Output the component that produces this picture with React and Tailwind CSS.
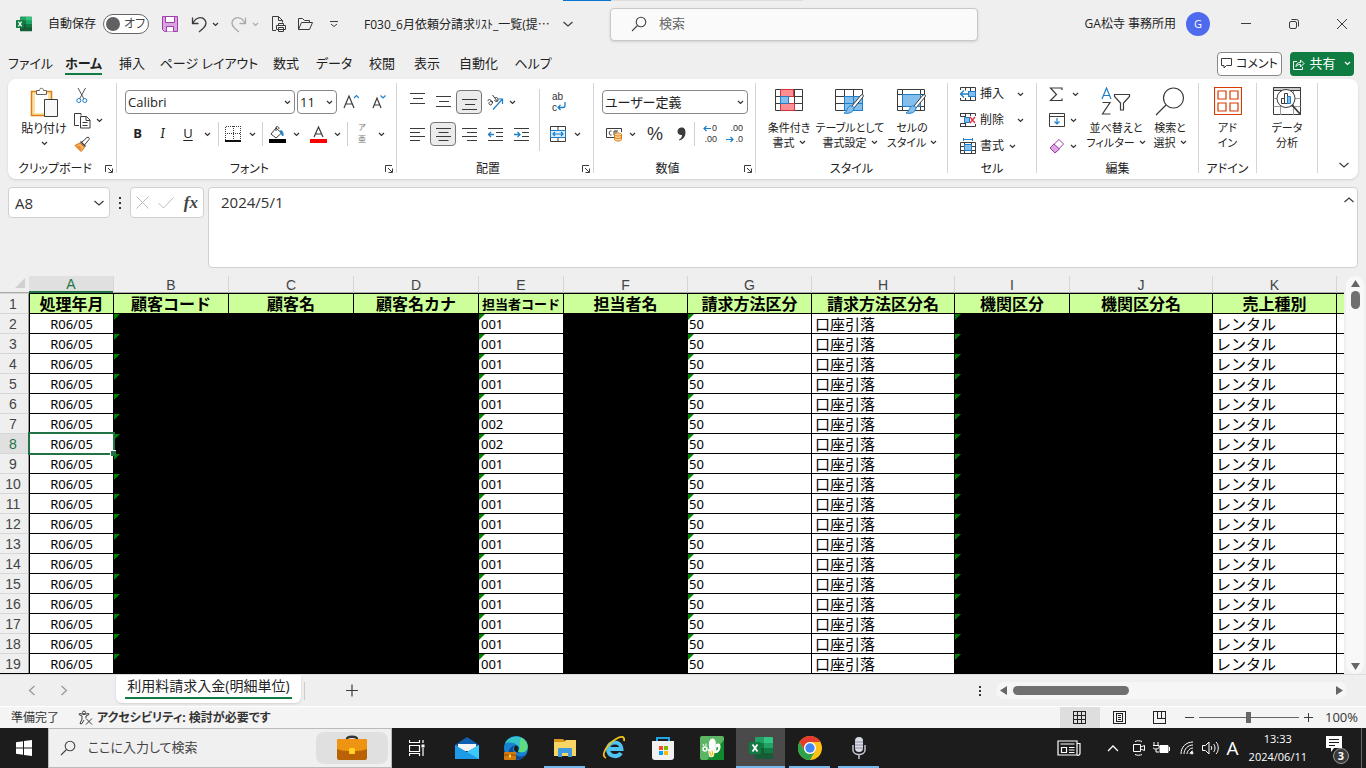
import React from 'react';

const Svg = ({ w = 16, h = 16, children, className = '', ...rest }) => (
  <svg
    width={w}
    height={h}
    viewBox={`0 0 ${w} ${h}`}
    fill="none"
    stroke="#3b3b3b"
    aria-hidden="true"
    className={`shrink-0 ${className}`}
    {...rest}
  >
    {children}
  </svg>
);

const Chevron = ({ className = '', color = '#333' }) => (
  <span className={`flex shrink-0 items-center justify-center ${className}`}>
    <Svg w={7} h={5} stroke={color} strokeWidth="1.2">
      <path d="M1 1l2.5 2.5L6 1" />
    </Svg>
  </span>
);

const BigChevron = ({ up }) => (
  <Svg w={12} h={8} strokeWidth="1.2">
    <path d={up ? 'M1.5 6L6 2l4.5 4' : 'M1.5 2L6 6l4.5-4'} />
  </Svg>
);

const ExcelLogo = ({ size = 16 }) => (
  <svg width={size} height={size} viewBox="0 0 24 24" aria-hidden="true">
    <rect x="6" y="1" width="18" height="22" rx="1" fill="#185c37" />
    <path d="M6 2a1 1 0 0 1 1-1h8v6H6z" fill="#21a366" />
    <path d="M15 1h8a1 1 0 0 1 1 1v5h-9z" fill="#33c481" />
    <path d="M6 7h9v5H6z" fill="#107c41" />
    <path d="M15 7h9v5h-9z" fill="#21a366" />
    <path d="M15 12h9v5h-9z" fill="#107c41" />
    <rect x="0" y="6" width="12" height="12" rx="1" fill="#107c41" />
    <path d="M3.500 8.500l5 7M8.500 8.500l-5 7" stroke="#fff" strokeWidth="1.800" />
  </svg>
);

const SearchIcon = ({ size = 16 }) => (
  <svg width={size} height={size} viewBox="0 0 16 16" fill="none" stroke="#444" strokeWidth="1.1" aria-hidden="true">
    <circle cx="10" cy="6" r="4.800" />
    <path d="M6.500 9.500L1 15" />
  </svg>
);

/* ---------- title bar ---------- */

function TitleBar() {
  return (
    <header className="flex h-12 shrink-0 items-center">
      <div className="flex w-[610px] shrink-0 items-center pl-4">
        <ExcelLogo />
        <label htmlFor="autosave" className="ml-4 w-[55px]">自動保存</label>
        <span className="relative flex h-5 w-[46px] items-center rounded-full border border-[#666] bg-white pl-0.5">
          <input id="autosave" type="checkbox" role="switch" className="absolute inset-0 appearance-none" />
          <span className="size-3.5 rounded-full bg-[#616161]" />
          <span className="ml-1 text-[#444]">オフ</span>
        </span>
        <button aria-label="上書き保存" className="ml-3">
          <Svg w={18} h={18} stroke="#a23bab">
            <path d="M1.500 1.500h15v15h-13l-2-2z" fill="#d9a5e0" />
            <path d="M4.500 1.500v6h9v-6zM5.500 16.500v-5h7v5" fill="#fff" />
          </Svg>
        </button>
        <button aria-label="元に戻す" className="ml-3 flex items-center">
          <Svg w={17} h={17} strokeWidth="1.300">
            <path d="M1.500 1.500v6h6M2 7c3-6 9-6.500 11.500-3.500s1 6.500-1 8.500L8 16" />
          </Svg>
          <Chevron className="ml-1" />
        </button>
        <button aria-label="やり直し" className="ml-3 flex items-center">
          <Svg w={17} h={17} strokeWidth="1.300" stroke="#aaa">
            <path d="M14.500 1.500v6h-6M14 7C11 1 5 .5 2.500 3.500s-1 6.500 1 8.500L8 16" />
          </Svg>
          <Chevron className="ml-1" color="#aaa" />
        </button>
        <button aria-label="印刷プレビュー" className="ml-3">
          <Svg w={16} h={18}>
            <path d="M5 15.500H1.500v-14h6l4 4v2M7.500 1.500v4h4" />
            <path d="M7.500 10.500v-2h5v2M5.500 14.500v-4h9v4zM7.500 12.500h5v4h-5z" fill="#efefef" />
          </Svg>
        </button>
        <button aria-label="開く" className="ml-2.5">
          <Svg w={17} h={16}>
            <path d="M1.500 13.500v-11h4l2 2h5v2M1.500 13.500l3-7h11l-3 7z" />
          </Svg>
        </button>
        <button aria-label="クイック アクセス ツール バーのユーザー設定" className="ml-4">
          <Svg w={8} h={8}>
            <path d="M0 1.500h8M1 4l3 2.500L7 4" />
          </Svg>
        </button>
        <h1 className="ml-[26px] w-[198px] whitespace-nowrap">
          F030_6月依頼分請求ﾘｽﾄ_一覧(提<span className="[font-family:'Noto_Sans_CJK_JP',sans-serif]">…</span>
        </h1>
        <BigChevron />
      </div>
      <div className="flex h-[33px] w-[368px] items-center rounded border border-[#c8c8c8] bg-[#fafafa] pl-5 shadow-sm">
        <SearchIcon />
        <input aria-label="検索" placeholder="検索" className="ml-3 w-72 text-[13px] outline-none placeholder:text-[#666]" />
      </div>
      <div className="ml-auto flex items-center">
        <span className="whitespace-nowrap">GA松寺 事務所用</span>
        <span className="mr-3 ml-2.5 flex size-6 items-center justify-center rounded-full bg-[#4f6bed] text-[11px] text-white">G</span>
        <button aria-label="最小化" className="flex w-12 justify-center">
          <Svg w={12} h={12}><path d="M1 5.500h10" /></Svg>
        </button>
        <button aria-label="元に戻す (縮小)" className="flex w-12 justify-center">
          <Svg w={12} h={12}>
            <rect x="1.500" y="3.500" width="7" height="7" rx="1.500" />
            <path d="M3.500 1.500h5a2 2 0 0 1 2 2v5" />
          </Svg>
        </button>
        <button aria-label="閉じる" className="flex w-12 justify-center">
          <Svg w={12} h={12}><path d="M1 1l10 10M11 1L1 11" /></Svg>
        </button>
      </div>
    </header>
  );
}

/* ---------- ribbon tabs ---------- */

const tabs = [
  { name: 'ファイル', width: 'w-[55px]' },
  { name: 'ホーム', width: 'w-[51px]', active: true },
  { name: '挿入', width: 'w-[46px]' },
  { name: 'ページ レイアウト', width: 'w-[108px]' },
  { name: '数式', width: 'w-[46px]' },
  { name: 'データ', width: 'w-[50px]' },
  { name: '校閲', width: 'w-[46px]' },
  { name: '表示', width: 'w-[44px]' },
  { name: '自動化', width: 'w-[59px]' },
  { name: 'ヘルプ', width: 'w-[50px]' },
];

function RibbonTabs() {
  return (
    <nav className="flex h-[31px] shrink-0 items-center pl-[3px] text-[13px]">
      {tabs.map((tab) => (
        <button key={tab.name} className={`flex shrink-0 justify-center whitespace-nowrap ${tab.width}`}>
          <span className={`border-b-2 leading-5 ${tab.active ? 'border-[#107c41] font-bold' : 'border-transparent'}`}>
            {tab.name}
          </span>
        </button>
      ))}
      <div className="ml-auto flex gap-2 pr-3">
        <button className="flex h-6 w-[65px] items-center justify-center gap-1 rounded border border-[#888] bg-white text-xs whitespace-nowrap">
          <Svg w={11} h={11}><path d="M.5.5h10v7h-5L3 10V7.500H.5z" /></Svg>
          コメント
        </button>
        <button className="flex h-6 w-16 items-center justify-center gap-1 rounded bg-[#107c41] text-white whitespace-nowrap">
          <Svg w={12} h={12} stroke="#fff">
            <path d="M4 3.500H.5v8h9V9M3 8.500c0-3 2-4 4.500-4V2L11 5.500 7.500 9V6.500C5.500 6.500 4 7 3 8.500z" />
          </Svg>
          共有
          <Chevron color="#fff" className="ml-1" />
        </button>
      </div>
    </nav>
  );
}

/* ---------- ribbon ---------- */

const Rule = () => <div className="mt-1 mb-1.5 w-px shrink-0 bg-[#d4d4d4]" />;
const ShortRule = ({ className = '' }) => <span className={`h-6 w-px shrink-0 bg-[#d0d0d0] ${className}`} />;

function Group({ label, launcher, width, children }) {
  return (
    <>
      <section aria-label={label} className={`relative flex shrink-0 flex-col ${width}`}>
        <div className="flex flex-1">{children}</div>
        <div className={`h-[19px] text-center leading-[18px] whitespace-nowrap ${launcher ? 'pr-3.5' : ''}`}>{label}</div>
        {launcher && (
          <button aria-label={`${label}の設定`} className="absolute right-[3px] bottom-1.5">
            <Svg w={8} h={8}><path d="M.5 7V.5H7M3 3l4 4M7.500 3.500v4h-4" /></Svg>
          </button>
        )}
      </section>
      <Rule />
    </>
  );
}

function Tool({ label, className = 'w-[26px]', active, children }) {
  return (
    <button
      aria-label={label}
      className={`flex h-6 shrink-0 items-center justify-center rounded ${active ? 'border border-[#777] bg-[#ebebeb]' : ''} ${className}`}
    >
      {children}
    </button>
  );
}

function BigButton({ icon, lines, chevron, className }) {
  return (
    <button className={`flex shrink-0 flex-col items-center pt-2 text-[11px] leading-[15px] whitespace-nowrap ${className}`}>
      <span className="flex h-[33px] items-start">{icon}</span>
      <span>{lines[0]}</span>
      <span className="flex items-center">
        {lines[1]}
        {chevron && <Chevron className="ml-1" />}
      </span>
    </button>
  );
}

function DropBox({ label, value, className }) {
  return (
    <span className={`relative flex h-6 items-center rounded border border-[#888] bg-white ${className}`}>
      <select aria-label={label} defaultValue={value} className="h-full w-full appearance-none pl-0.5 text-[13px] leading-5 outline-none">
        <option>{value}</option>
      </select>
      <span className="pointer-events-none absolute right-[3px]"><Chevron /></span>
    </span>
  );
}

const bars = {
  top: 'M0 1.500h15M3 6.500h10M0 11.500h15',
  left: 'M0 1.500h15M0 5.500h10M0 9.500h15M0 13.500h10',
  center: 'M0 1.500h15M2.500 5.500h10M0 9.500h15M2.500 13.500h10',
  right: 'M0 1.500h15M5 5.500h10M0 9.500h15M5 13.500h10',
};

const Lines = ({ d, className }) => <Svg w={15} h={15} className={className}><path d={d} /></Svg>;

const brushPath = (
  <>
    <path d="M28 10l-9 11c-1 1-3-.5-2-2L26 8c2-1 3 0 2 2z" fill="#fff" />
    <path d="M17 19c2 .5 2.500 2 1.500 4-1.500 3-6 4-9.500 3 2.500-1 2.500-2.500 3.500-4.500 1-2 2.500-3 4.500-2.500z" fill="#83beec" stroke="#1e7fc8" />
  </>
);

const CondIcon = (
  <Svg w={28} h={29}>
    <path d="M.5 2.500h27v21H.5zM.5 9.500h27M.5 16.500h27M19.500 2.500v21M5.500 2.500v21" />
    <path d="M5.500 2.500h13v7h-13zM5.500 16.500h14v7h-14z" fill="#ff8f94" stroke="#d13438" />
    <path d="M5.500 9.500h8v7h-8z" fill="#83beec" stroke="#1e7fc8" />
  </Svg>
);

const TableIcon = (
  <Svg w={31} h={29}>
    <path d="M.5 2.500h27v21H.5zM.5 9.500h27M.5 16.500h27M9.500 2.500v21M18.500 2.500v21" />
    <path d="M9.500 9.500h18v14h-18z" fill="#83beec" stroke="#1e7fc8" />
    <path d="M18.500 9.500v14M9.500 16.500h18" stroke="#1e7fc8" />
    {brushPath}
  </Svg>
);

const StyleIcon = (
  <Svg w={31} h={29}>
    <path d="M.5 2.500h27v21H.5zM.5 7.500h27M.5 19.500h27M5.500 2.500v21M23.500 2.500v21" />
    <path d="M5.500 7.500h18v12h-18z" fill="#83beec" stroke="#1e7fc8" />
    {brushPath}
  </Svg>
);

const cellTools = [
  {
    name: '挿入',
    gap: 'ml-2.5',
    icon: (
      <Svg>
        <path d="M.5 4V1.500h15v13H.5V12M5.500 1.500v3M10.500 1.500v13M5.500 12v2.500M8 5.500h7.500v5H8" />
        <path d="M8.500 5.500h7v5h-7z" fill="#83beec" stroke="#1e7fc8" />
        <path d="M8 8H.5M4 4.500L.5 8 4 11.500" stroke="#1e7fc8" strokeWidth="1.300" />
      </Svg>
    ),
  },
  {
    name: '削除',
    gap: 'ml-2.5',
    icon: (
      <Svg>
        <path d="M0 1.500h15.500V4M.5 1.500v3h5M.5 14.500v-3h5M0 14.500h15.500V12M5.500 1.500v13M10.500 1.500V4" />
        <path d="M4.500 5.500h5v5h-5z" fill="#83beec" stroke="#1e7fc8" />
        <path d="M10 5l5 6M15 5l-5 6" stroke="#e0303a" strokeWidth="1.300" />
      </Svg>
    ),
  },
  {
    name: '書式',
    gap: 'ml-0.5',
    icon: (
      <Svg>
        <path d="M.5 4.500h15v11H.5zM.5 8.500h15M.5 12.500h15M4.500 4.500v11M11.500 4.500v11" />
        <path d="M4.500 6.500h7v6h-7z" fill="#83beec" stroke="#1e7fc8" />
        <path d="M4 1.500h8M3.500 0v3M12.500 0v3" stroke="#1e7fc8" />
      </Svg>
    ),
  },
];

function Ribbon() {
  return (
    <div className="mx-2 flex h-[100px] shrink-0 rounded-lg bg-white shadow-sm">
      <Group label="クリップボード" launcher width="w-[108px]">
        <button className="ml-2.5 flex w-[52px] flex-col items-center pt-2 leading-4 whitespace-nowrap">
          <Svg w={30} h={32}>
            <path d="M2.500 4.500h20v24h-20z" fill="#fbe3a6" stroke="#e07b12" strokeWidth="1.500" />
            <path d="M6 7h13v19H6z" fill="#fff" stroke="none" />
            <path d="M7.500 7.500v-4h3c0-3 4-3 4 0h3v4z" fill="#fff" stroke="#666" />
            <path d="M15.500 12.500h13v17h-13z" fill="#f8f8f8" />
          </Svg>
          <span className="mt-0.5">貼り付け</span>
          <Chevron className="h-3" />
        </button>
        <div className="flex flex-col pt-1">
          <Tool label="切り取り" className="w-6">
            <Svg w={12} h={17}>
              <path d="M2 1l6 11M9.500 1l-6 11" stroke="#555" />
              <circle cx="2.800" cy="13.500" r="2" stroke="#1e7fc8" />
              <circle cx="8.800" cy="13.500" r="2" stroke="#1e7fc8" />
            </Svg>
          </Tool>
          <div className="flex pt-px">
            <Tool label="コピー" className="w-6">
              <Svg w={17} h={17}>
                <path d="M7 3.500V1.500H.5v12H5" />
                <path d="M6.500 4.500h6l3.500 3.500v8H6.500zM12 4.500v4h4M8.500 10.500h5M8.500 13.500h5" />
              </Svg>
            </Tool>
            <Chevron className="w-2.5" />
          </div>
          <Tool label="書式のコピー/貼り付け" className="w-6">
            <Svg w={17} h={17}>
              <path d="M8 6l5-4.500c1.500-1 3 .5 2 2L10.500 9" fill="#fff" />
              <path d="M6.500 5.500l5 5" strokeWidth="1.500" />
              <path d="M6 7l4.500 4.500L7 15.500 1 9.500z" fill="#f9b15b" stroke="#d96f0e" />
              <path d="M3 11h3v3" stroke="#d96f0e" />
            </Svg>
          </Tool>
        </div>
      </Group>

      <Group label="フォント" launcher width="w-[279px]">
        <div className="flex flex-col gap-2 pt-[11px] pl-2">
          <div className="flex items-center">
            <DropBox label="フォント" value="Calibri" className="w-[170px]" />
            <DropBox label="フォント サイズ" value="11" className="ml-0.5 w-10" />
            <Tool label="フォント サイズの拡大" className="w-7">
              <Svg w={16} h={16}>
                <path d="M1 14L6 2l5 12M3 10h6" strokeWidth="1.200" />
                <path d="M11 4l2.500-2.500L16 4" stroke="#1e7fc8" strokeWidth="1.200" />
              </Svg>
            </Tool>
            <Tool label="フォント サイズの縮小">
              <Svg w={15} h={16}>
                <path d="M2 14L6 4l4 10M3.500 11h5" strokeWidth="1.200" />
                <path d="M9.500 1.500L12 4l2.500-2.500" stroke="#1e7fc8" strokeWidth="1.200" />
              </Svg>
            </Tool>
          </div>
          <div className="flex items-center">
            <Tool label="太字" className="w-[25px] text-[13px] font-bold">B</Tool>
            <Tool label="斜体" className="w-[25px] font-serif text-[14px] italic">I</Tool>
            <Tool label="下線" className="w-[26px] text-[13px] underline underline-offset-2">U</Tool>
            <Chevron className="w-3" />
            <ShortRule className="mx-[5px]" />
            <Tool label="罫線" className="w-[18px]">
              <Svg shapeRendering="crispEdges">
                <path d="M.5 14V.5h15V14M8 0v14M0 7.500h16" strokeDasharray="1 1" />
                <path d="M0 15h16" strokeWidth="2" stroke="#111" />
              </Svg>
            </Tool>
            <Chevron className="w-5" />
            <ShortRule />
            <Tool label="塗りつぶしの色" className="w-7">
              <Svg w={17} h={17}>
                <path d="M7 2L2 8l5 4 5.500-5z" />
                <path d="M7 5V1c2-1 3 0 3 2" />
                <path d="M11 5c2-1 3.500 1 3 5-1.500-1-1.500-3-3-5z" fill="#1e7fc8" stroke="#1e7fc8" />
                <path d="M0 15h17" strokeWidth="4" stroke="#000" />
              </Svg>
            </Tool>
            <Chevron className="w-2.5" />
            <Tool label="フォントの色" className="ml-1 w-[26px]">
              <Svg w={17} h={17}>
                <path d="M4 11l4.500-10L13 11M5.500 8h6" strokeWidth="1.200" />
                <path d="M0 15h17" strokeWidth="4" stroke="#f00" />
              </Svg>
            </Tool>
            <Chevron className="w-3" />
            <ShortRule className="ml-1" />
            <Tool
              label="ふりがなの表示/非表示"
              className="w-7 flex-col text-[8px] leading-[12px] text-[#777] [font-family:'Liberation_Sans','Noto_Sans_CJK_JP',sans-serif]"
            >
              <span>ア</span>
              <span>亜</span>
            </Tool>
            <Chevron className="w-2.5" />
          </div>
        </div>
      </Group>

      <Group label="配置" launcher width="w-[196px]">
        <div className="flex flex-col gap-2 pt-[11px] pl-[7px]">
          <div className="flex">
            <Tool label="上揃え"><Lines d={bars.top} className="-mt-1.5" /></Tool>
            <Tool label="上下中央揃え"><Lines d={bars.top} /></Tool>
            <Tool label="下揃え" active><Lines d={bars.top} className="mt-1.5" /></Tool>
            <Tool label="方向">
              <Svg w={17} h={17}>
                <path d="M1 7c0-2 2-2 3.500 0l1.500 2M5 7c-2 0-4 2-2.500 3.500S6 10 5 7M5.500 1l5 6.500M8 4c2-1.500 4 1 2.500 3-1 1-2.500.5-3-1" />
                <path d="M6 15.500L15.500 5M10.500 5h5v5" stroke="#1e7fc8" strokeWidth="1.200" />
              </Svg>
            </Tool>
            <Chevron className="w-2" />
          </div>
          <div className="flex">
            <Tool label="左揃え"><Lines d={bars.left} /></Tool>
            <Tool label="中央揃え" active><Lines d={bars.center} /></Tool>
            <Tool label="右揃え"><Lines d={bars.right} /></Tool>
            <Tool label="インデントを減らす">
              <Svg w={15} h={15}>
                <path d="M0 1.500h15M8 5.500h7M8 9.500h7M0 13.500h15" />
                <path d="M6 7.500H.5M3 5L.5 7.500 3 10" stroke="#1e7fc8" strokeWidth="1.300" />
              </Svg>
            </Tool>
            <Tool label="インデントを増やす">
              <Svg w={15} h={15}>
                <path d="M0 1.500h15M8 5.500h7M8 9.500h7M0 13.500h15" />
                <path d="M0 7.500h6M3.500 5L6 7.500 3.500 10" stroke="#1e7fc8" strokeWidth="1.300" />
              </Svg>
            </Tool>
          </div>
        </div>
        <span className="mt-2.5 ml-[5px] h-[62px] w-px bg-[#d0d0d0]" />
        <div className="flex flex-col gap-2 pt-[11px] pl-1.5">
          <Tool label="折り返して全体を表示する" className="w-[26px] flex-col text-[10px] leading-[10px] text-[#333] [font-family:'Liberation_Sans',sans-serif]">
            <span className="h-[11px] w-3.5 text-left leading-[11px]">ab</span>
            <span className="flex h-[11px] w-3.5 leading-[11px]">
              c
              <Svg w={9} h={9} stroke="#1e7fc8" strokeWidth="1.300">
                <path d="M8 0v3.500c0 1-1 2-2 2H1M3.500 3L1 5.500 3.500 8" />
              </Svg>
            </span>
          </Tool>
          <div className="flex">
            <Tool label="セルを結合して中央揃え" className="w-6">
              <Svg>
                <path d="M.5.5h15v15H.5zM8 .5v4M8 12v3.500" />
                <path d="M.5 4.500h15v7H.5z" fill="#d9ecfb" stroke="#1e7fc8" />
                <path d="M3 8h10M5 6L3 8l2 2M11 6l2 2-2 2" stroke="#1e7fc8" strokeWidth="1.200" />
              </Svg>
            </Tool>
            <Chevron className="w-3.5" />
          </div>
        </div>
      </Group>

      <Group label="数値" launcher width="w-[161px]">
        <div className="flex flex-col gap-2 pt-[11px] pl-2">
          <DropBox label="数値の書式" value="ユーザー定義" className="w-[146px]" />
          <div className="flex items-center">
            <Tool label="通貨表示形式" className="w-6">
              <Svg w={17} h={15}>
                <path d="M8 10.500H.5v-9h15V5M5.500 4c-3-1-3 5 0 4M8 8V4h4M10 4v3" />
                <path d="M8.500 7.500v5c0 2 7 2 7 0v-5c0-2-7-2-7 0s7 2 7 0M8.500 10c0 2 7 2 7 0" fill="#fbd9a8" stroke="#e07b12" />
              </Svg>
            </Tool>
            <Chevron className="w-3" />
            <Tool label="パーセント スタイル" className="ml-1 w-[26px] text-[18px] text-[#333] [font-family:'Liberation_Sans',sans-serif]">%</Tool>
            <Tool label="桁区切りスタイル">
              <Svg w={9} h={14} stroke="none">
                <path d="M4.500.5c3 0 4 2 4 5 0 4-2 6.500-6 8l-.5-1c2-1 3-2.500 3-4.500C2.500 8.500.5 7 .5 4.500.5 2 2.500.5 4.500.5z" fill="#3b3b3b" />
              </Svg>
            </Tool>
            <ShortRule className="mr-px" />
            <Tool
              label="小数点以下の表示桁数を増やす"
              className="w-[26px] flex-col text-[9px] leading-[11px] text-[#333] [font-family:'Liberation_Sans',sans-serif]"
            >
              <span className="flex h-[11px] w-4 items-center justify-end">
                <Svg w={9} h={7} stroke="#1e7fc8" strokeWidth="1.200"><path d="M8 3.500H1M3.500 1L1 3.500 3.500 6" /></Svg>0
              </span>
              <span className="h-[11px] w-4 text-right">.00</span>
            </Tool>
            <Tool
              label="小数点以下の表示桁数を減らす"
              className="w-[26px] flex-col text-[9px] leading-[11px] text-[#333] [font-family:'Liberation_Sans',sans-serif]"
            >
              <span className="h-[11px] w-4 text-right">.00</span>
              <span className="flex h-[11px] w-4 items-center justify-end">
                <Svg w={9} h={7} stroke="#1e7fc8" strokeWidth="1.200"><path d="M0 3.500h7M4.500 1L7 3.500 4.500 6" /></Svg>.0
              </span>
            </Tool>
          </div>
        </div>
      </Group>

      <Group label="スタイル" width="w-[191px]">
        <BigButton className="ml-1 w-[58px]" icon={CondIcon} lines={['条件付き', '書式']} chevron />
        <BigButton className="w-16" icon={TableIcon} lines={['テーブルとして', '書式設定']} chevron />
        <BigButton className="w-[60px]" icon={StyleIcon} lines={['セルの', 'スタイル']} chevron />
      </Group>

      <Group label="セル" width="w-[88px]">
        <div className="flex flex-col gap-0.5 pt-[3px] pl-3">
          {cellTools.map((tool) => (
            <button key={tool.name} className="flex h-6 items-center">
              {tool.icon}
              <span className="ml-1">{tool.name}</span>
              <Chevron className={`w-3 ${tool.gap}`} />
            </button>
          ))}
        </div>
      </Group>

      <Group label="編集" width="w-[161px]">
        <div className="flex w-[45px] flex-col gap-0.5 pt-[3px] pl-3">
          <button aria-label="合計" className="flex h-6 items-center">
            <Svg w={14} h={15} strokeWidth="1.200"><path d="M13 3V1H1.500l6 6.500-6 6H13v-2" /></Svg>
            <Chevron className="ml-1.5 w-3" />
          </button>
          <button aria-label="フィル" className="flex h-6 items-center">
            <Svg w={16} h={14}>
              <path d="M.5.5h15v13H.5zM.5 3.500h15" />
              <path d="M8 5v6M5.500 8.500L8 11l2.500-2.500" stroke="#1e7fc8" strokeWidth="1.200" />
            </Svg>
            <Chevron className="ml-0.5 w-3" />
          </button>
          <button aria-label="クリア" className="flex h-6 items-center">
            <Svg stroke="#a23bab">
              <path d="M10 1.500l4.500 4.500-8.500 9L1 10z" fill="#fff" />
              <path d="M5 6l5.500 5L6 15 1 10z" fill="#d9a5e0" />
            </Svg>
            <Chevron className="ml-0.5 w-3" />
          </button>
        </div>
        <BigButton
          className="w-[68px]"
          icon={
            <Svg w={30} h={29} strokeWidth="1.200">
              <path d="M1 12L5.500 1 10 12M2.500 8.500h6" stroke="#1e7fc8" />
              <path d="M1.500 15.500H9L1.500 27H9.500" />
              <path d="M13.500 7.500h15v2L22.500 16v7h-3v-7l-6-6.500z" />
            </Svg>
          }
          lines={['並べ替えと', 'フィルター']}
          chevron
        />
        <BigButton
          className="w-10"
          icon={
            <Svg w={30} h={29} strokeWidth="1.200">
              <circle cx="18.500" cy="11" r="10" />
              <path d="M11 18L1 28" />
            </Svg>
          }
          lines={['検索と', '選択']}
          chevron
        />
      </Group>

      <Group label="アドイン" width="w-[57px]">
        <BigButton
          className="w-full"
          icon={
            <Svg w={28} h={28} stroke="#d83b01" strokeWidth="1.200">
              <path d="M.5.5h27v27H.5zM4 4h8v8H4zM16 4h8v8h-8zM4 16h8v8H4zM16 16h8v8h-8z" />
            </Svg>
          }
          lines={['アド', 'イン']}
        />
      </Group>

      <Group width="w-[60px]">
        <BigButton
          className="w-full"
          icon={
            <Svg w={28} h={29}>
              <path d="M.5.500h27v27H.5z" />
              <path d="M.5.500h27v3H.5z" fill="#ccc" />
              <path d="M.5 11.500h27M.5 19.500h27M7.500 4v24M20.500 4v24" stroke="#999" />
              <circle cx="13" cy="11.500" r="9" fill="#fff" />
              <path d="M19 18l8.500 9.500" strokeWidth="1.800" />
              <path d="M8.500 11.500h3v5h-3zM11.500 6.500h3v10h-3z" />
              <path d="M14.500 9.500h3v7h-3z" fill="#83beec" stroke="#1e7fc8" />
            </Svg>
          }
          lines={['データ', '分析']}
        />
      </Group>

      <button aria-label="リボンの表示オプション" className="mt-auto mr-2 mb-2.5 ml-auto">
        <BigChevron />
      </button>
    </div>
  );
}

/* ---------- formula bar ---------- */

function FormulaBar() {
  return (
    <div className="flex shrink-0 items-start px-2 py-2 text-[15px]">
      <div className="flex h-[31px] w-[102px] items-center rounded border border-[#d0d0d0] bg-white pr-1">
        <input aria-label="名前ボックス" defaultValue="A8" className="w-full min-w-0 pl-1.5 text-[#333] outline-none" />
        <BigChevron />
      </div>
      <div className="flex h-[31px] w-5 items-center justify-center">
        <Svg w={2} h={12} stroke="none" fill="#333"><path d="M0 0h2v2H0zM0 5h2v2H0zM0 10h2v2H0z" /></Svg>
      </div>
      <div className="flex h-[31px] w-[74px] items-center justify-between rounded border border-[#d0d0d0] bg-white px-[5px]">
        <button aria-label="キャンセル"><Svg w={13} h={13} stroke="#bbb"><path d="M.5.5l12 12M12.500.5l-12 12" /></Svg></button>
        <button aria-label="入力"><Svg w={16} h={12} stroke="#bbb"><path d="M.5 6l5 5L15.500.5" /></Svg></button>
        <button className="text-[17px] leading-6 font-bold text-[#444] italic [font-family:'Liberation_Serif',serif]" aria-label="関数の挿入">fx</button>
      </div>
      <div className="ml-1 flex h-[81px] flex-1 items-start rounded border border-[#d0d0d0] bg-white">
        <textarea aria-label="数式バー" defaultValue="2024/5/1" className="h-full flex-1 resize-none pt-1 pl-3 leading-5 text-[#333] outline-none" />
        <button aria-label="数式バーの折りたたみ" className="mt-2 mr-0.5 flex"><BigChevron up /></button>
      </div>
    </div>
  );
}

/* ---------- worksheet ---------- */

const columns = [
  { id: 'A', title: '処理年月', width: 'w-[84px]' },
  { id: 'B', title: '顧客コード', width: 'w-[115px]', masked: true, flag: true },
  { id: 'C', title: '顧客名', width: 'w-[125px]', masked: true },
  { id: 'D', title: '顧客名カナ', width: 'w-[125px]', masked: true },
  { id: 'E', title: '担当者コード', width: 'w-[85px]', flag: true },
  { id: 'F', title: '担当者名', width: 'w-[124px]', masked: true },
  { id: 'G', title: '請求方法区分', width: 'w-[124px]', flag: true },
  { id: 'H', title: '請求方法区分名', width: 'w-[143px]' },
  { id: 'I', title: '機関区分', width: 'w-[115px]', masked: true, flag: true },
  { id: 'J', title: '機関区分名', width: 'w-[143px]', masked: true },
  { id: 'K', title: '売上種別', width: 'w-[124px]' },
];

const rows = Array.from({ length: 18 }, (_, i) => ({
  no: i + 2,
  A: 'R06/05',
  E: i === 5 || i === 6 ? '002' : '001',
  G: '50',
  H: '口座引落',
  K: 'レンタル',
}));

const cellStyle = {
  A: 'text-center text-[13px]',
  E: 'pl-0.5 text-[13px]',
  G: 'pl-px text-[13px]',
  H: 'pl-[3px] text-[15px]',
  K: 'pl-[3px] text-[15px]',
};

function RowNumber({ no, active }) {
  return (
    <th
      scope="row"
      className={`border-t border-r border-[#d6d6d6] border-r-[#999] p-0 pr-0.5 text-center text-[14px] font-normal [font-family:'Liberation_Sans',sans-serif] ${active ? 'bg-[#e0e0e0] text-[#217346]' : 'text-[#444]'}`}
    >
      {no}
    </th>
  );
}

function Sheet() {
  return (
    <div className="flex min-h-0 flex-1">
      <div className="min-w-0 flex-1 overflow-hidden text-black [font-feature-settings:normal]">
        <table className="w-full table-fixed border-separate border-spacing-0 border-b border-black">
          <colgroup>
            <col className="w-[29px]" />
            {columns.map((c) => <col key={c.id} className={c.width} />)}
            <col />
          </colgroup>
          <thead className="text-[14px] leading-4 text-[#444] [font-family:'Liberation_Sans',sans-serif]">
            <tr className="h-[17px]">
              <td className="border-b border-[#aaa] p-0">
                <Svg w={10} h={10} className="mb-0.5 ml-[15px]" stroke="none"><path d="M10 0v10H0z" fill="#d0d0d0" /></Svg>
              </td>
              {columns.map((c) => (
                <th
                  key={c.id}
                  scope="col"
                  className={
                    c.id === 'A'
                      ? 'border-b-2 border-[#217346] bg-[#e0e0e0] p-0 pt-0.5 leading-[13px] font-normal text-[#217346]'
                      : 'border-b border-l border-b-[#aaa] border-l-[#d6d6d6] p-0 pt-0.5 leading-[14px] font-normal'
                  }
                >
                  {c.id}
                </th>
              ))}
              <td className="border-b border-l border-b-[#aaa] border-l-[#d6d6d6] p-0" />
            </tr>
          </thead>
          <tbody className="leading-[18px] [font-family:'Noto_Sans','Noto_Sans_CJK_JP',sans-serif]">
            <tr className="h-5">
              <RowNumber no={1} />
              {columns.map((c) => (
                <th
                  key={c.id}
                  className={`border-t border-l border-black bg-[#ccff99] p-0 font-bold whitespace-nowrap ${c.id === 'E' ? 'text-[13px]' : 'text-[16px]'}`}
                >
                  {c.title}
                </th>
              ))}
              <td className="border-t border-l border-black bg-[#ccff99] p-0" />
            </tr>
            {rows.map((row) => (
              <tr key={row.no} className="h-5">
                <RowNumber no={row.no} active={row.no === 8} />
                {columns.map((c) => (
                  <td
                    key={c.id}
                    className={`relative border-t border-l border-black p-0 whitespace-nowrap ${c.masked ? 'bg-black' : 'bg-white'} ${cellStyle[c.id] || ''}`}
                  >
                    {row[c.id]}
                    {c.flag && (
                      <span className="absolute top-0 left-0 size-1.5 bg-[#008000] [clip-path:polygon(0_0,100%_0,0_100%)]" />
                    )}
                    {c.id === 'A' && row.no === 8 && (
                      <span className="absolute -inset-x-0.5 -top-0.5 -bottom-0.5 z-10 border-2 border-[#217346]">
                        <span className="absolute -right-[3px] -bottom-[3px] size-1.5 border-t border-l border-white bg-[#217346]" />
                      </span>
                    )}
                  </td>
                ))}
                <td className="border-t border-l border-black bg-white p-0" />
              </tr>
            ))}
          </tbody>
        </table>
      </div>
      <div className="mx-0.5 flex w-[18px] flex-col items-center rounded-full bg-[#f8f8f8] py-1">
        <Svg w={9} h={7} stroke="none" fill="#666"><path d="M4.500 0L9 7H0z" /></Svg>
        <span className="mt-1 h-[18px] w-[9px] rounded-full bg-[#707070]" />
        <Svg w={9} h={7} stroke="none" fill="#666" className="mt-auto"><path d="M4.500 7L9 0H0z" /></Svg>
      </div>
    </div>
  );
}

function SheetTabs() {
  return (
    <div className="flex h-8 shrink-0 items-center border-t border-[#ddd]">
      <button aria-label="前のシート" className="ml-7"><Svg w={8} h={11} stroke="#999" strokeWidth="1.300"><path d="M6.500 1L1.500 5.500l5 4.500" /></Svg></button>
      <button aria-label="次のシート" className="ml-6"><Svg w={8} h={11} stroke="#999" strokeWidth="1.300"><path d="M1.500 1l5 4.500-5 4.500" /></Svg></button>
      <button className="ml-12 flex w-[185px] justify-center self-start rounded-b-md bg-white pb-1 text-[14px] whitespace-nowrap shadow-sm">
        <span className="border-b-2 border-[#107c41] px-0.5 leading-[22px]">利用料請求入金(明細単位)</span>
      </button>
      <span className="ml-[3px] h-[18px] w-px bg-[#ccc]" />
      <button aria-label="新しいシート" className="ml-10"><Svg w={14} h={14}><path d="M1 6.500h12M7 .5v12" strokeWidth="1.200" /></Svg></button>
      <Svg w={2} h={10} stroke="none" fill="#333" className="ml-auto"><path d="M0 0h2v2H0zM0 4h2v2H0zM0 8h2v2H0z" /></Svg>
      <div className="mr-[19px] ml-[15px] flex h-[17px] w-[351px] items-center rounded-full bg-[#f6f6f6] px-1">
        <Svg w={7} h={9} stroke="none" fill="#666"><path d="M7 0v9L0 4.500z" /></Svg>
        <span className="ml-1.5 h-[9px] w-[116px] rounded-full bg-[#707070]" />
        <Svg w={7} h={9} stroke="none" fill="#666" className="ml-auto"><path d="M0 0v9l7-4.500z" /></Svg>
      </div>
    </div>
  );
}

function StatusBar() {
  return (
    <footer className="flex h-[22px] shrink-0 items-center border-t border-white bg-[#f4f4f4] whitespace-nowrap text-[#333]">
      <span className="ml-[11px] w-[67px]">準備完了</span>
      <Svg w={15} h={15}>
        <circle cx="6" cy="2.500" r="1.500" />
        <path d="M1 4.500l3 1.500v3L2 13.500l1.500.5L6 10M11 4.500L8 6v2M1 4.500c0-1 .5-1 1-1l4 1 4-1c1 0 1.500.5 1 1" />
        <path d="M8 8.500l6 6M14 8.500l-6 6" />
      </Svg>
      <button className="ml-1 font-bold">アクセシビリティ: 検討が必要です</button>
      <div className="ml-auto flex h-full items-center">
        <button aria-label="標準" className="flex h-full w-10 items-center justify-center bg-[#dedede]">
          <Svg w={13} h={13} shapeRendering="crispEdges" stroke="#222"><path d="M.5.5h12v12H.5zM4.500.5v12M8.500.5v12M.5 4.500h12M.5 8.500h12" /></Svg>
        </button>
        <button aria-label="ページ レイアウト" className="flex w-10 justify-center">
          <Svg w={13} h={13} shapeRendering="crispEdges" stroke="#222"><path d="M.5.5h12v12H.5zM3.500 2.500h6v8h-6zM5 4.500h3M5 6.500h3M5 8.500h3" /></Svg>
        </button>
        <button aria-label="改ページ プレビュー" className="flex w-10 justify-center">
          <Svg w={13} h={13} shapeRendering="crispEdges" stroke="#222"><path d="M.5.5h12v12H.5zM4.500.5v7h4v-7M8.500 7.500h4" /></Svg>
        </button>
        <button aria-label="縮小" className="ml-[5px]"><Svg w={9} h={9}><path d="M0 4.500h9" /></Svg></button>
        <input
          type="range"
          aria-label="ズーム"
          defaultValue="50"
          className="mx-[5px] h-px w-[100px] appearance-none bg-[#666] [&::-webkit-slider-thumb]:h-[11px] [&::-webkit-slider-thumb]:w-[5px] [&::-webkit-slider-thumb]:appearance-none [&::-webkit-slider-thumb]:bg-[#666]"
        />
        <button aria-label="拡大"><Svg w={9} h={9}><path d="M0 4.500h9M4.500 0v9" /></Svg></button>
        <span className="mr-2 ml-3 text-[13px]">100%</span>
      </div>
    </footer>
  );
}

/* ---------- windows taskbar ---------- */

const apps = [
  {
    name: 'メール',
    icon: (
      <svg width="24" height="24" viewBox="0 0 24 24">
        <path d="M0 9L12 1l12 8v4H0z" fill="#0f5fb0" />
        <path d="M3 8h18v7H3z" fill="#f4f4f4" />
        <path d="M0 9l12 7 12-7v14H0z" fill="#1e9be8" />
        <path d="M24 9L12 16l12 7z" fill="#3cc8f8" />
      </svg>
    ),
  },
  {
    name: 'Microsoft Edge',
    icon: (
      <svg width="24" height="24" viewBox="0 0 24 24">
        <circle cx="12" cy="12" r="12" fill="#1682d4" />
        <path d="M1 8C4-1 17-2 22 5c3 4 2 10-3 11h-5c2-2 2-5-1-7C9 6 3 6 1 8z" fill="#35c5c9" />
        <path d="M17 1.500c6 3 9 11 4 14-2 1-5 1-7 .5 3-3 1-7 3-14.500z" fill="#5fdc7c" />
        <path d="M11 9c-4 3-2 9 3 11 3 1 6 0 8.500-2-3 5-9 7-14 5-6-3-5-11 2.500-14z" fill="#134a8e" />
        <path d="M11.500 9.500c2-.5 4 2 2.500 4.500-.5 1-.5 2 2 2.500-3 .5-6-1-6-3.500 0-1.500.5-3 1.500-3.500z" fill="#1c1c1c" />
        <rect x="0" y="16" width="12" height="8" rx="1" fill="#d27b0c" />
        <path d="M0 19h12" stroke="#8a4a05" />
        <rect x="5" y="18.500" width="2" height="3" fill="#ffd94a" />
      </svg>
    ),
  },
  {
    name: 'エクスプローラー',
    open: true,
    icon: (
      <svg width="22" height="20" viewBox="0 0 22 20">
        <path d="M0 1h9l2 2h11v6H0z" fill="#d9971a" />
        <path d="M0 4h10l2-2h10v16H0z" fill="#fbd466" />
        <path d="M4 19v-8a1 1 0 0 1 1-1h12a1 1 0 0 1 1 1v8h-4v-4H8v4z" fill="#3f9be0" />
      </svg>
    ),
  },
  {
    name: 'Internet Explorer',
    icon: (
      <svg width="24" height="24" viewBox="0 0 24 24" fill="none">
        <path d="M19 17c-3 5-13 4-13-4S19 4 19.500 13H7" stroke="#4fc3f2" strokeWidth="4" />
        <path d="M4 22c-6-2 1-14 10-19 5-3 9-3 8 2" stroke="#f2c21a" strokeWidth="1.800" />
      </svg>
    ),
  },
  {
    name: 'Microsoft Store',
    icon: (
      <svg width="24" height="24" viewBox="0 0 24 24">
        <path d="M6 7V2h12v5" fill="none" stroke="#1fa5e8" strokeWidth="2" />
        <path d="M1 5h22v16a3 3 0 0 1-3 3H4a3 3 0 0 1-3-3z" fill="#f1f1f1" />
        <path d="M8 10h4v4H8z" fill="#f25022" />
        <path d="M13 10h4v4h-4z" fill="#7fba00" />
        <path d="M8 15h4v4H8z" fill="#00a4ef" />
        <path d="M13 15h4v4h-4z" fill="#ffb900" />
      </svg>
    ),
  },
  {
    name: 'ツール',
    icon: (
      <svg width="24" height="24" viewBox="0 0 24 24">
        <rect width="24" height="24" rx="2" fill="#5bb562" />
        <path d="M24 4v18a2 2 0 0 1-2 2H7z" fill="#108a2c" />
        <path d="M9.500 13C8 8 9 2.500 12.500 2.500S16.500 8 15 13z" fill="#fff" />
        <path d="M16 8c3-1.500 5 0 4.500 3.500S18 17.500 14 17l1-4z" fill="#fff" />
        <path d="M16.500 11.500c1-1 2 0 1.500 1.500s-1.500 1.500-2 1" fill="#2c9a41" />
        <path d="M3 8l1 2M6 7.500V10" stroke="#fff" />
        <circle cx="5" cy="13" r="2" fill="none" stroke="#fff" strokeWidth="1.500" />
        <path d="M8 13h7l-1 7c-2 2-4 1.500-5 0z" fill="#fff" />
        <path d="M9.500 15.500l2 5M12 14.500l1 5" stroke="#f0c419" strokeWidth="1.300" />
      </svg>
    ),
  },
  { name: 'Excel', open: true, active: true, icon: <ExcelLogo size={24} /> },
  {
    name: 'Google Chrome',
    open: true,
    icon: (
      <svg width="24" height="24" viewBox="0 0 24 24">
        <circle cx="12" cy="12" r="12" fill="#fbc116" />
        <path d="M1.600 6A12 12 0 0 1 22.400 6H12a6 6 0 0 0-5.200 9z" fill="#e33b2e" />
        <path d="M1.600 6l5.200 9A6 6 0 0 0 17.200 15L12 24A12 12 0 0 1 1.600 6z" fill="#2ba24c" />
        <circle cx="12" cy="12" r="6" fill="#fff" />
        <circle cx="12" cy="12" r="4.700" fill="#4285f4" />
      </svg>
    ),
  },
  {
    name: 'ボイス レコーダー',
    open: true,
    icon: (
      <svg width="16" height="24" viewBox="0 0 16 24" fill="none">
        <rect x="4" y="1" width="8" height="15" rx="4" fill="#d9dbe6" />
        <path d="M4 6h8M4 9h8M4 12h8" stroke="#8d90a5" />
        <path d="M2 9v5c0 6 12 6 12 0V9M8 19v4" stroke="#c4c6d2" strokeWidth="1.500" />
      </svg>
    ),
  },
];

function Taskbar() {
  return (
    <div className="flex h-10 shrink-0 items-center bg-[#1c1c1c] text-white">
      <button aria-label="スタート" className="flex w-12 shrink-0 justify-center">
        <Svg w={16} h={16} stroke="none" fill="#fff"><path d="M0 2.200L7 1.200v6.300H0zM8 1l8-1v7.500H8zM0 8.500h7v6.300l-7-1zM8 8.500h8V16l-8-1z" /></Svg>
      </button>
      <div className="flex h-full w-[344px] shrink-0 items-center border border-[#bbb] bg-[#f0f0f0] pr-[3px] pl-[11px] text-[#222]">
        <SearchIcon />
        <input
          aria-label="ここに入力して検索"
          placeholder="ここに入力して検索"
          className="ml-3 min-w-0 flex-1 text-[13px] outline-none placeholder:text-[#444]"
        />
        <span className="flex h-8 w-[72px] shrink-0 items-center justify-center rounded-lg bg-[#e0e0e0]">
          <svg width="32" height="26" viewBox="0 0 32 26" fill="none" aria-hidden="true">
            <path d="M11 4c0-3 10-3 10 0" stroke="#333" strokeWidth="2.500" />
            <rect x="1" y="4" width="30" height="21" rx="2" fill="#b86205" />
            <path d="M1 6a2 2 0 0 1 2-2h26a2 2 0 0 1 2 2v8c-8 3-22 3-30 0z" fill="#ee9412" />
            <rect x="13" y="13" width="6" height="6" rx="1" fill="#ffd21e" />
          </svg>
        </span>
      </div>
      <button aria-label="タスク ビュー" className="flex w-[50px] shrink-0 justify-center">
        <Svg w={16} h={16} stroke="#fff" strokeWidth="1.200"><path d="M.5 0v2.500h10V0M.5 5.500h10v6H.5zM.5 16v-2.500h10V16M14 0v3M14 8v8" /><path d="M12.500 4.500h3v3h-3z" fill="#fff" stroke="none" /></Svg>
      </button>
      {apps.map((app) => (
        <button
          key={app.name}
          aria-label={app.name}
          className={`flex h-full w-[49px] shrink-0 items-stretch justify-center ${app.open && !app.active ? 'px-1' : ''}`}
        >
          <span
            className={`flex w-full items-center justify-center border-y-2 border-t-transparent ${app.active ? 'bg-[#4a4a4a]' : ''} ${app.open ? 'border-b-[#76b9ed]' : 'border-b-transparent'}`}
          >
            {app.icon}
          </span>
        </button>
      ))}
      <div className="ml-auto flex h-full shrink-0 items-center">
        <button aria-label="ニュース">
          <Svg w={24} h={16} stroke="#fff" strokeWidth="1.200"><path d="M1 1h19v14H1zM20 3.500h3V13a2 2 0 0 1-3 2M3.500 4h14M12 7.500h5.500M12 10h5.500M12 12.500h5.500" /><path d="M4.500 7.500h5v5h-5z" /></Svg>
        </button>
        <button aria-label="隠れているインジケーター" className="ml-[26px]">
          <Svg w={12} h={8} stroke="#fff" strokeWidth="1.300"><path d="M1 7l5-5 5 5" /></Svg>
        </button>
        <Svg w={12} h={16} stroke="#fff" className="ml-3.5"><path d="M.5 4.500h7v7h-7zM7.500 7l4-1.500v5L7.500 9M2 1.500c2-1 5-1 7 0M2 14.500c2 1 5 1 7 0" /></Svg>
        <Svg w={17} h={14} stroke="#fff" className="ml-2"><path d="M1 1v3M5 1v3M0 4.500h6v2c0 2-6 2-6 0M3 8v3h3" /><path d="M7 4.500h8v7H7z" fill="#fff" /><path d="M16.500 6v4" /></Svg>
        <Svg w={14} h={14} stroke="#fff" className="ml-2.5"><path d="M1 13C1 6 6 1 13 1M4 13c0-5 4-9 9-9M7 13c0-3 3-6 6-6M10 13c0-1.500 1.500-3 3-3" /><circle cx="12" cy="12" r="1" fill="#fff" /></Svg>
        <Svg w={17} h={14} stroke="#fff" className="ml-2"><path d="M.5 4.500h3L7 1v12L3.500 9.500h-3zM9 5c1 1 1 3 0 4M11.500 3c2 2 2 6 0 8M14 1c3 3 3 9 0 12" /></Svg>
        <span className="ml-2 text-[19px] leading-5">A</span>
        <time className="ml-2.5 text-center text-[11px] leading-[18px]" dateTime="2024-06-11T13:33">
          13:33<br />2024/06/11
        </time>
        <button aria-label="通知 3 件" className="relative mr-3 ml-[18px] h-8 w-6">
          <Svg w={18} h={17} className="absolute top-1 left-0" stroke="none"><path d="M1 0h16v12h-8l-3 4v-4H1z" fill="#fff" /><path d="M4 3.500h10M4 6.500h10M4 9.500h6" stroke="#1c1c1c" /></Svg>
          <span className="absolute right-0 bottom-0 flex size-4 items-center justify-center rounded-full border border-[#999] bg-[#3a3a3a] text-[11px] font-bold">3</span>
        </button>
        <span className="mr-1 h-full w-px bg-[#666]" />
      </div>
    </div>
  );
}

export default function App() {
  return (
    <div className="relative flex h-screen flex-col overflow-hidden bg-[#efefef] text-xs text-[#222] [font-family:'Open_Sans','Noto_Sans_CJK_JP',sans-serif] [font-feature-settings:'palt']">
      <div className="absolute top-0 left-[563px] flex h-px w-60 bg-[#ddd]">
        <span className="w-12 bg-[#0a74d6]" />
      </div>
      <TitleBar />
      <RibbonTabs />
      <Ribbon />
      <FormulaBar />
      <Sheet />
      <SheetTabs />
      <StatusBar />
      <Taskbar />
    </div>
  );
}
